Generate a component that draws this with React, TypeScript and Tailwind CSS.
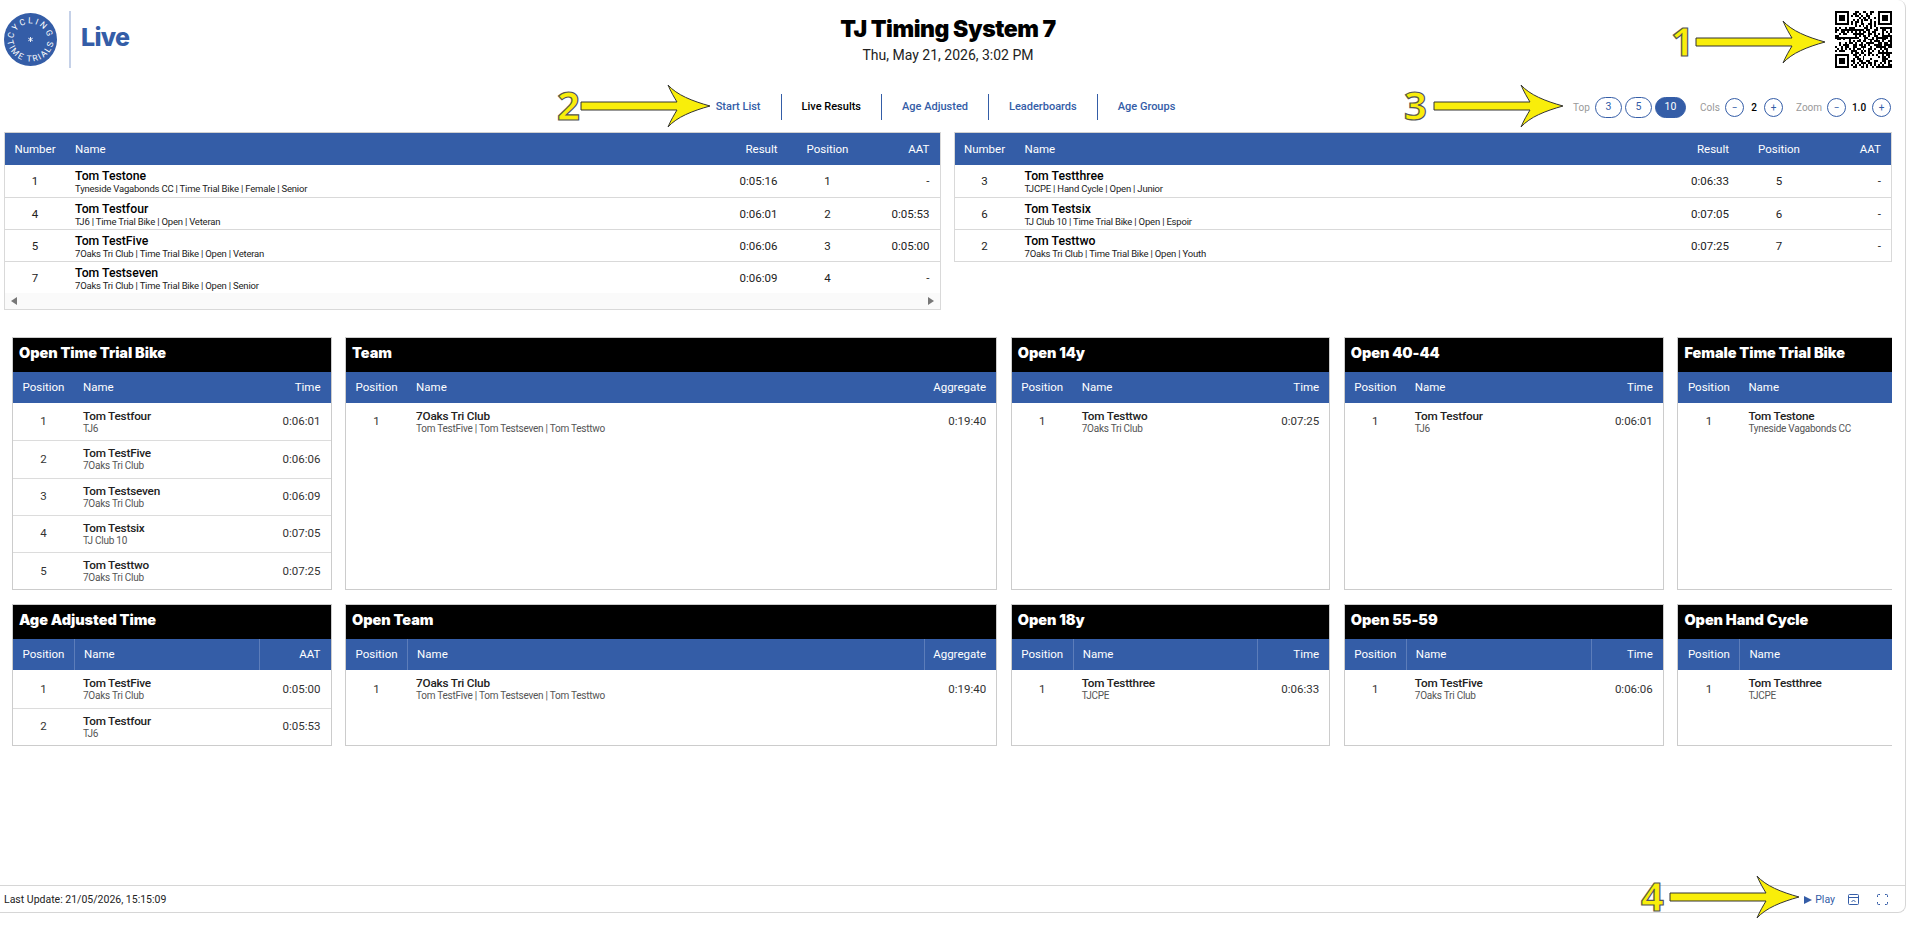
import React from "react";

const BLUE = "bg-[#345da7]";

function qrCells(): string {
  const n = 29;
  let seed = 1234567;
  const rnd = () => {
    seed = (seed * 1103515245 + 12345) & 0x7fffffff;
    return (seed >> 12) & 1;
  };
  const finder = (x: number, y: number, ox: number, oy: number) => {
    const dx = x - ox;
    const dy = y - oy;
    if (dx < -1 || dy < -1 || dx > 7 || dy > 7) return null;
    if (dx < 0 || dy < 0 || dx > 6 || dy > 6) return false;
    if (dx === 0 || dy === 0 || dx === 6 || dy === 6) return true;
    return dx >= 2 && dx <= 4 && dy >= 2 && dy <= 4;
  };
  let d = "";
  for (let y = 0; y < n; y++) {
    for (let x = 0; x < n; x++) {
      const f = [finder(x, y, 0, 0), finder(x, y, n - 7, 0), finder(x, y, 0, n - 7)].find((v) => v !== null);
      const on = f !== undefined && f !== null ? f : rnd() === 1;
      if (on) d += `M${x} ${y}h1v1h-1z`;
    }
  }
  return d;
}

function Logo() {
  return (
    <svg width="53" height="53" viewBox="0 0 53 53" className="shrink-0">
      <defs>
        <path id="logo-top" d="M9 28 A17.5 17.5 0 0 1 44 28" />
        <path id="logo-bot" d="M3 25 A23.5 23.5 0 0 0 50 25" />
      </defs>
      <circle cx="26.5" cy="26.5" r="26.5" fill="#345da7" />
      <text fill="#fff" fontSize="8.5" fontFamily="Roboto, sans-serif" letterSpacing="2.2">
        <textPath href="#logo-top" startOffset="50%" textAnchor="middle">CYCLING</textPath>
      </text>
      <text fill="#fff" fontSize="8.5" fontFamily="Roboto, sans-serif" letterSpacing="1.6">
        <textPath href="#logo-bot" startOffset="50%" textAnchor="middle">TIME TRIALS</textPath>
      </text>
      <path d="M26.5 24v5M24.3 25.2l4.4 2.6M24.3 27.8l4.4-2.6" stroke="#fff" strokeWidth="0.9" />
    </svg>
  );
}

function Arrow({ className }: { className: string }) {
  return (
    <svg width="132" height="44" viewBox="0 0 132 44" className={"absolute z-10 " + className}>
      <path
        d="M130 22 C112 17 97 11 88 1 C91 8 94 13 97 18 L1 18 L1 26 L97 26 C94 31 91 36 88 43 C97 33 112 27 130 22 Z"
        fill="#f9ee0a"
        stroke="#333"
        strokeWidth="1"
        strokeLinejoin="round"
      />
    </svg>
  );
}

function Digit({ children, className }: { children: React.ReactNode; className: string }) {
  return (
    <span
      className={
        "absolute z-10 font-['Open_Sans',sans-serif] font-bold text-[40px] leading-[40px] text-[#f9ee0a] [-webkit-text-stroke:1.2px_#555] " +
        className
      }
    >
      {children}
    </span>
  );
}

function PillButton({ label, active }: { label: string; active?: boolean }) {
  return (
    <span
      className={
        "flex h-[21px] items-center justify-center rounded-full border border-[#345da7] text-[10.5px] " +
        (active ? "w-[31px] bg-[#345da7] text-white" : "w-[27px] bg-white text-[#345da7]")
      }
    >
      {label}
    </span>
  );
}

function Round({ label }: { label: string }) {
  return (
    <span className="flex h-[19px] w-[19px] items-center justify-center rounded-full border border-[#345da7] text-[10px] text-[#345da7]">
      {label}
    </span>
  );
}

const navItems = ["Start List", "Live Results", "Age Adjusted", "Leaderboards", "Age Groups"];

function Nav() {
  return (
    <nav className="flex h-[26px] items-center">
      {navItems.map((n, i) => (
        <span
          key={n}
          className={
            "flex h-full items-center px-[20px] text-[11px] font-medium " +
            (i > 0 ? "border-l border-[#345da7] " : "") +
            (n === "Live Results" ? "text-black" : "text-[#345da7]")
          }
        >
          {n}
        </span>
      ))}
    </nav>
  );
}

function Controls() {
  return (
    <div className="flex items-center justify-end text-[10px]">
      <span className="mr-[6px] w-[16px] whitespace-nowrap text-[#999]">Top</span>
      <div className="flex gap-[3px]">
        <PillButton label="3" />
        <PillButton label="5" />
        <PillButton label="10" active />
      </div>
      <span className="ml-[14px] mr-[6px] w-[19px] whitespace-nowrap text-[#999]">Cols</span>
      <Round label="−" />
      <span className="w-[20px] text-center font-medium text-black">2</span>
      <Round label="+" />
      <span className="ml-[13px] mr-[6px] w-[25px] whitespace-nowrap text-[#999]">Zoom</span>
      <Round label="−" />
      <span className="w-[26px] text-center font-medium text-black">1.0</span>
      <Round label="+" />
    </div>
  );
}

type LiveRow = { num: string; name: string; sub: string; result: string; pos: string; aat: string };

const left: LiveRow[] = [
  { num: "1", name: "Tom Testone", sub: "Tyneside Vagabonds CC | Time Trial Bike | Female | Senior", result: "0:05:16", pos: "1", aat: "-" },
  { num: "4", name: "Tom Testfour", sub: "TJ6 | Time Trial Bike | Open | Veteran", result: "0:06:01", pos: "2", aat: "0:05:53" },
  { num: "5", name: "Tom TestFive", sub: "7Oaks Tri Club | Time Trial Bike | Open | Veteran", result: "0:06:06", pos: "3", aat: "0:05:00" },
  { num: "7", name: "Tom Testseven", sub: "7Oaks Tri Club | Time Trial Bike | Open | Senior", result: "0:06:09", pos: "4", aat: "-" },
];
const right: LiveRow[] = [
  { num: "3", name: "Tom Testthree", sub: "TJCPE | Hand Cycle | Open | Junior", result: "0:06:33", pos: "5", aat: "-" },
  { num: "6", name: "Tom Testsix", sub: "TJ Club 10 | Time Trial Bike | Open | Espoir", result: "0:07:05", pos: "6", aat: "-" },
  { num: "2", name: "Tom Testtwo", sub: "7Oaks Tri Club | Time Trial Bike | Open | Youth", result: "0:07:25", pos: "7", aat: "-" },
];

function LiveTable({ rows, scroll }: { rows: LiveRow[]; scroll?: boolean }) {
  return (
    <div className="min-w-0 border border-[#d9d9d9] border-t-[#d0d0d0]">
      <div className={"grid h-[32px] grid-cols-[60px_1fr_90px_80px_72px] items-center pt-[2px] text-[11.5px] text-white " + BLUE}>
        <span className="text-center">Number</span>
        <span className="pl-[10px]">Name</span>
        <span className="pr-[10px] text-right">Result</span>
        <span className="text-center">Position</span>
        <span className="pr-[10px] text-right">AAT</span>
      </div>
      {rows.map((r, i) => (
        <div
          key={r.num}
          className={
            "grid h-[32px] grid-cols-[60px_1fr_90px_80px_72px] items-center pt-[2px] text-[11.5px] text-[#222] " +
            (i > 0 ? "border-t border-[#d9d9d9]" : "")
          }
        >
          <span className="text-center">{r.num}</span>
          <div className="pl-[10px]">
            <div className="text-[12.25px] font-medium leading-[13px] text-black">{r.name}</div>
            <div className="text-[9.5px] leading-[11px] tracking-[-0.2px] text-[#222]">{r.sub}</div>
          </div>
          <span className="pr-[10px] text-right">{r.result}</span>
          <span className="text-center">{r.pos}</span>
          <span className="pr-[10px] text-right">{r.aat}</span>
        </div>
      ))}
      {scroll && (
        <div className="flex h-[16px] items-center justify-between bg-[#fafafa] px-[6px]">
          <span className="h-0 w-0 border-y-[4.5px] border-r-[6px] border-y-transparent border-r-[#777]" />
          <span className="h-0 w-0 border-y-[4.5px] border-l-[6px] border-y-transparent border-l-[#777]" />
        </div>
      )}
    </div>
  );
}

type BoardRow = { pos: string; name: string; sub: string; val: string };
type Board = { title: string; col: string; rows: BoardRow[] };

const row1: Board[] = [
  {
    title: "Open Time Trial Bike",
    col: "Time",
    rows: [
      { pos: "1", name: "Tom Testfour", sub: "TJ6", val: "0:06:01" },
      { pos: "2", name: "Tom TestFive", sub: "7Oaks Tri Club", val: "0:06:06" },
      { pos: "3", name: "Tom Testseven", sub: "7Oaks Tri Club", val: "0:06:09" },
      { pos: "4", name: "Tom Testsix", sub: "TJ Club 10", val: "0:07:05" },
      { pos: "5", name: "Tom Testtwo", sub: "7Oaks Tri Club", val: "0:07:25" },
    ],
  },
  {
    title: "Team",
    col: "Aggregate",
    rows: [{ pos: "1", name: "7Oaks Tri Club", sub: "Tom TestFive | Tom Testseven | Tom Testtwo", val: "0:19:40" }],
  },
  { title: "Open 14y", col: "Time", rows: [{ pos: "1", name: "Tom Testtwo", sub: "7Oaks Tri Club", val: "0:07:25" }] },
  { title: "Open 40-44", col: "Time", rows: [{ pos: "1", name: "Tom Testfour", sub: "TJ6", val: "0:06:01" }] },
  { title: "Female Time Trial Bike", col: "Time", rows: [{ pos: "1", name: "Tom Testone", sub: "Tyneside Vagabonds CC", val: "0:05:16" }] },
];

const row2: Board[] = [
  {
    title: "Age Adjusted Time",
    col: "AAT",
    rows: [
      { pos: "1", name: "Tom TestFive", sub: "7Oaks Tri Club", val: "0:05:00" },
      { pos: "2", name: "Tom Testfour", sub: "TJ6", val: "0:05:53" },
    ],
  },
  {
    title: "Open Team",
    col: "Aggregate",
    rows: [{ pos: "1", name: "7Oaks Tri Club", sub: "Tom TestFive | Tom Testseven | Tom Testtwo", val: "0:19:40" }],
  },
  { title: "Open 18y", col: "Time", rows: [{ pos: "1", name: "Tom Testthree", sub: "TJCPE", val: "0:06:33" }] },
  { title: "Open 55-59", col: "Time", rows: [{ pos: "1", name: "Tom TestFive", sub: "7Oaks Tri Club", val: "0:06:06" }] },
  { title: "Open Hand Cycle", col: "Time", rows: [{ pos: "1", name: "Tom Testthree", sub: "TJCPE", val: "0:06:33" }] },
];

function BoardCard({ board, dividers }: { board: Board; dividers?: boolean }) {
  const sep = dividers ? "border-l border-[#5c7dba] " : "";
  return (
    <div className="min-w-0 border border-[#cccccc] bg-white">
      <div className="flex h-[33.5px] items-center bg-black pb-[4px] pl-[6px] font-['Inter',sans-serif] text-[14.5px] font-black tracking-[-0.05px] text-white">
        {board.title}
      </div>
      <div className={"grid h-[31.5px] grid-cols-[61px_1fr_72px] items-center text-[11.5px] text-white " + BLUE}>
        <span className="flex h-full items-center justify-center">Position</span>
        <span className={sep + "flex h-full items-center pl-[9px]"}>Name</span>
        <span className={sep + "flex h-full items-center justify-end pr-[10px]"}>{board.col}</span>
      </div>
      {board.rows.map((r, i) => (
        <div
          key={r.pos}
          className={
            "grid h-[37.3px] grid-cols-[61px_1fr_72px] items-center text-[11.5px] text-[#333] " +
            (i > 0 ? "border-t border-[#dcdcdc]" : "")
          }
        >
          <span className="text-center">{r.pos}</span>
          <div className="pl-[9px]">
            <div className="text-[11.75px] font-medium leading-[14px] tracking-[-0.2px] text-[#222]">{r.name}</div>
            <div className="text-[10px] leading-[12px] tracking-[-0.25px] text-[#555]">{r.sub}</div>
          </div>
          <span className="pr-[10px] text-right">{r.val}</span>
        </div>
      ))}
    </div>
  );
}

export default function App() {
  const qr = qrCells();
  return (
    <div className="relative h-[925px] w-[1906px] overflow-hidden bg-white font-['Roboto',sans-serif]">
      <div className="flex h-[913px] flex-col rounded-r-lg border-r border-b border-[#d6d6d6]">
        <header className="grid h-[94px] grid-cols-[1fr_auto_1fr] pl-[4px] pr-[13px] pt-[11px]">
          <div className="flex h-[57px] items-center">
            <Logo />
            <span className="ml-[12px] h-full w-[2px] bg-[#c5d1e8]" />
            <span className="ml-[10px] -translate-y-[2px] font-['Inter',sans-serif] text-[25px] font-extrabold tracking-[-0.7px] text-[#345da7]">
              Live
            </span>
          </div>
          <div className="flex flex-col items-center">
            <h1 className="font-['Inter',sans-serif] text-[23px] font-black leading-[36px] tracking-[-0.45px] text-black">
              TJ Timing System 7
            </h1>
            <p className="mt-[1px] text-[14px] leading-[15px] text-[#222]">Thu, May 21, 2026, 3:02 PM</p>
          </div>
          <div className="flex justify-end">
            <svg width="57" height="57" viewBox="0 0 29 29" shapeRendering="crispEdges">
              <path d={qr} fill="#000" />
            </svg>
          </div>
        </header>

        <div className="grid h-[26px] grid-cols-[1fr_auto_1fr] items-center pr-[14px]">
          <div />
          <Nav />
          <Controls />
        </div>

        <div className="mt-[12px] grid grid-cols-[936.5px_1fr] items-start gap-[13px] pl-[4px] pr-[13px]">
          <LiveTable rows={left} scroll />
          <LiveTable rows={right} />
        </div>

        <div className="mt-[27px] mr-[13px] grid grid-cols-[319.5px_652px_319.5px_320px_320px] gap-x-[13.6px] gap-y-[14px] overflow-hidden pl-[12px]">
          {row1.map((b) => (
            <BoardCard key={b.title} board={b} />
          ))}
          {row2.map((b) => (
            <BoardCard key={b.title} board={b} dividers />
          ))}
        </div>

        <footer className="mt-auto flex h-[27px] items-center justify-between border-t border-[#d6d6d6] pl-[4px] pr-[17px] pt-[1px] text-[10.5px]">
          <span className="text-[#222]">Last Update: 21/05/2026, 15:15:09</span>
          <div className="flex items-center text-[#345da7]">
            <span className="h-0 w-0 border-y-[4.5px] border-l-[8px] border-y-transparent border-l-[#345da7]" />
            <span className="ml-[3px]">Play</span>
            <svg width="11" height="11" viewBox="0 0 11 11" className="ml-[13px]" fill="none" stroke="#345da7">
              <rect x="0.5" y="0.5" width="10" height="10" rx="1" />
              <path d="M0.5 3.5h10M3.5 8l2-2 2 2" />
            </svg>
            <svg width="11" height="11" viewBox="0 0 11 11" className="ml-[18px]" fill="none" stroke="#345da7" strokeWidth="1">
              <path d="M0.5 3V1.5a1 1 0 0 1 1-1H3M8 .5h1.5a1 1 0 0 1 1 1V3M10.5 8v1.5a1 1 0 0 1-1 1H8M3 10.5H1.5a1 1 0 0 1-1-1V8" />
            </svg>
          </div>
        </footer>
      </div>

      <Digit className="left-[1671px] top-[21px]">1</Digit>
      <Arrow className="left-[1695px] top-[20px]" />
      <Digit className="left-[557px] top-[85px]">2</Digit>
      <Arrow className="left-[580px] top-[84px]" />
      <Digit className="left-[1404px] top-[85px]">3</Digit>
      <Arrow className="left-[1433px] top-[84px]" />
      <Digit className="left-[1641px] top-[876px]">4</Digit>
      <Arrow className="left-[1669px] top-[875px]" />
    </div>
  );
}
